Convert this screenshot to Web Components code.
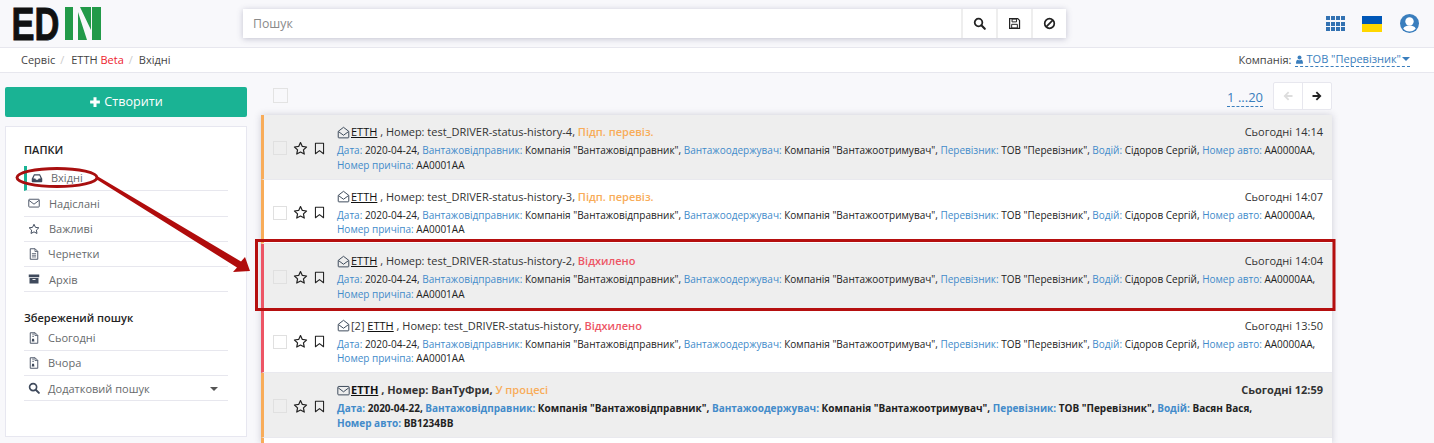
<!DOCTYPE html>
<html lang="uk">
<head>
<meta charset="utf-8">
<title>EDIN</title>
<style>
  html, body { margin: 0; height: 100%; }
  body {
    width: 1434px; height: 443px; overflow: hidden; position: relative;
    background: #f8f8fb; color: #333;
    font: 11px/1.4 "Open Sans", "Noto Sans", sans-serif;
  }
  .main { display: flex; align-items: flex-start; }
</style>
</head>
<body>
<edn-header></edn-header>
<edn-crumbs></edn-crumbs>
<div class="main">
  <edn-sidebar></edn-sidebar>
  <edn-list>
    <edn-row state="Підп. перевіз." tone="#f8ac59" shade num="test_DRIVER-status-history-4" time="Сьогодні 14:14"></edn-row>
    <edn-row state="Підп. перевіз." tone="#f8ac59" num="test_DRIVER-status-history-3" time="Сьогодні 14:07"></edn-row>
    <edn-row state="Відхилено" tone="#ed5565" shade num="test_DRIVER-status-history-2" time="Сьогодні 14:04"></edn-row>
    <edn-row state="Відхилено" tone="#ed5565" prefix="[2] " num="test_DRIVER-status-history" time="Сьогодні 13:50"></edn-row>
    <edn-row state="У процесі" tone="#f8ac59" shade unread num="ВанТуФри" time="Сьогодні 12:59" date="2020-04-22" driver="Васян Вася" last="Номер авто:|BB1234BB"></edn-row>
    <edn-row blank tone="#f8ac59"></edn-row>
  </edn-list>
</div>
<edn-notes></edn-notes>

<script>
// FontAwesome-ish icons, redrawn by hand. All on a 16 box.
const ICONS = {
  envOpen: '<path d="M1.5 6.6 8 1.6l6.5 5v7.2a.8.8 0 0 1-.8.8H2.3a.8.8 0 0 1-.8-.8z" fill="none" stroke="currentColor" stroke-width="1.2"/><path d="M2 7l6 4.4L14 7" fill="none" stroke="currentColor" stroke-width="1.2"/>',
  env: '<rect x="1" y="3" width="14" height="10.4" rx="1" fill="none" stroke="currentColor" stroke-width="1.2"/><path d="M1.4 4.6 8 9.6l6.6-5" fill="none" stroke="currentColor" stroke-width="1.2"/>',
  inbox: '<path d="M4 3h8l3 6v3.6a1 1 0 0 1-1 1H2a1 1 0 0 1-1-1V9z" fill="currentColor"/><path d="M4.800 4.500h6.400l1.700 4.300h-2.700l-.8 1.400H6.600l-.8-1.400H3.100z" fill="#fff"/>',
  star: '<path d="M8 1.700l1.950 4.100 4.500.6-3.300 3.100.85 4.450L8 11.800l-4 2.150.85-4.450-3.300-3.100 4.500-.6z" fill="none" stroke="currentColor" stroke-width="1.300" stroke-linejoin="round"/>',
  bookmark: '<path d="M3 1.500h10v13L8 10.600 3 14.500z" fill="none" stroke="currentColor" stroke-width="1.300" stroke-linejoin="round"/>',
  file: '<path d="M3 1h6.500L13 4.500V15H3z" fill="none" stroke="currentColor" stroke-width="1.200"/><path d="M9.300 1.200v3.500H13M5.200 7.500h5.600M5.200 9.700h5.600M5.200 11.900h5.600" fill="none" stroke="currentColor"/>',
  fileZip: '<path d="M3 1h6.500L13 4.500V15H3z" fill="none" stroke="currentColor" stroke-width="1.200"/><path d="M9.300 1.200v3.500H13" fill="none" stroke="currentColor"/><path d="M6 2h1.500v1.500H6zM6 5h1.500v1.500H6zM5.500 9h2.500l.5 3.500H5z" fill="currentColor"/>',
  archive: '<path d="M1 2h14v3.500H1zM2 6.500h12V14H2z" fill="currentColor"/><path d="M6 8h4v1.200H6z" fill="#fff"/>',
  search: '<circle cx="6.800" cy="6.800" r="4.700" fill="none" stroke="currentColor" stroke-width="2.200"/><path d="M10.300 10.300l4.200 4.200" stroke="currentColor" stroke-width="2.600" stroke-linecap="round"/>',
  save: '<path d="M2 2h10l2.200 2.200V14H2z" fill="none" stroke="currentColor" stroke-width="1.500"/><path d="M5 2.500h5.500v3.500H5zM4.500 9h7v4.500h-7z" fill="none" stroke="currentColor" stroke-width="1.200"/>',
  ban: '<circle cx="8" cy="8" r="5.900" fill="none" stroke="currentColor" stroke-width="2.100"/><path d="M3.900 12.100l8.200-8.200" stroke="currentColor" stroke-width="2.100"/>',
  plus: '<path d="M6 1.500h4V6h4.500v4H10v4.500H6V10H1.500V6H6z" fill="currentColor"/>',
  left: '<path d="M8 2 2 8l6 6 1.700-1.700-3-3h7.300V6.700H6.700l3-3z" fill="currentColor"/>',
  right: '<path d="M8 2l6 6-6 6-1.700-1.700 3-3H2V6.700h7.300l-3-3z" fill="currentColor"/>',
  user: '<circle cx="8" cy="4.600" r="3.500" fill="currentColor"/><path d="M1.800 14.500c0-4 1.600-6 3.200-6 1 .7 1.900 1 3 1s2-.3 3-1c1.600 0 3.200 2 3.200 6 0 .6-.5 1-1 1H2.800c-.5 0-1-.4-1-1z" fill="currentColor"/>',
};
const icon = (name, size, extra = '') =>
  `<svg viewBox="0 0 16 16" width="${size}" height="${size}" style="display:block;flex:none;${extra}">${ICONS[name]}</svg>`;

class EdnHeader extends HTMLElement {
  constructor() {
    super();
    this.attachShadow({ mode: 'open' }).innerHTML = `
      <style>
        :host { display: flex; align-items: center; height: 48px; box-sizing: border-box; padding-left: 13px; border-bottom: 1px solid #e7e7ee; background: #f8f8fb; }
        .logo { display: block; flex: none; width: 230px; height: 47px; overflow: visible; }
        .search { display: flex; width: 823px; height: 29px; margin-top: -1px; background: #fff; box-shadow: 0 1px 6px rgba(70,70,110,.3); }
        .search span { flex: 1; padding-left: 10px; line-height: 29px; font-size: 12.300px; color: #8a8a8a; }
        .search i { display: flex; align-items: center; justify-content: center; width: 33px; border-left: 2px solid #eee; color: #222; }
        .tools { display: flex; align-items: center; margin-left: auto; margin-right: 15px; color: #337ab7; }
        .flag { width: 20px; height: 16px; margin: 0 18px 0 17px; background: linear-gradient(#0057b7 50%, #ffd700 50%); }
        .grid { display: grid; grid-template-columns: repeat(4, 4px); grid-auto-rows: 4px; gap: 1.500px 1px; }
        .grid b { background: #3372b2; }
        .avatar { display: block; width: 19px; height: 19px; }
      </style>
      <svg class="logo" viewBox="0 0 230 47">
        <g transform="scale(1 1.33)">
          <text x="-1.500" y="30" font-family="Liberation Sans" font-weight="700" font-size="34.500" fill="#111" stroke="#111" stroke-width=".7">ED</text>
        </g>
        <path d="M52 7h8v33h-8zM65 12V40H74zM67 7H78V30zM79 7h9v33h-9z" fill="#229a49"/>
      </svg>
      <div class="search">
        <span>Пошук</span>
        <i>${icon('search', 13)}</i><i>${icon('save', 13)}</i><i>${icon('ban', 13)}</i>
      </div>
      <div class="tools">
        <div class="grid">${'<b></b>'.repeat(12)}</div>
        <div class="flag"></div>
        <svg class="avatar" viewBox="0 0 19 19">
          <circle cx="9.500" cy="9.500" r="9.500" fill="#3a7ebd"/>
          <circle cx="9.500" cy="7.500" r="4.200" fill="#fff"/>
          <path d="M3.200 14.500C4.500 12.300 6.800 11.800 9.500 11.800s5 .5 6.300 2.700a8 8 0 0 1-12.600 0z" fill="#fff"/>
        </svg>
      </div>`;
  }
}

class EdnCrumbs extends HTMLElement {
  constructor() {
    super();
    this.attachShadow({ mode: 'open' }).innerHTML = `
      <style>
        :host { display: flex; align-items: center; height: 25px; box-sizing: border-box; padding: 0 24px 1px 21px; background: #fff; border-bottom: 1px solid #e7e7ee; font-size: 11px; color: #444; }
        em { font-style: normal; color: #ccc; margin: 0 7px 0 5px; }
        em + span + em { margin-right: 6px; }
        .red { color: #ed1c2e; }
        .co { margin-left: auto; display: flex; align-items: center; gap: 3px; }
        .sel { display: flex; align-items: center; gap: 3px; color: #3a7ebd; border-bottom: 1px dashed #3a7ebd; line-height: 14px; margin-bottom: -1px; }
        .caret { width: 0; height: 0; border: 4px solid transparent; border-top-color: #3a7ebd; border-bottom: 0; margin-left: -2px; }
      </style>
      <span>Сервіс</span><em>/</em>
      <span>ЕТТН <span class="red">Beta</span></span><em>/</em>
      <span>Вхідні</span>
      <div class="co">Компанія:
        <div class="sel">${icon('user', 9)}ТОВ "Перевізник"<i class="caret"></i></div>
      </div>`;
  }
}

class EdnFolder extends HTMLElement {
  constructor() {
    super();
    const pad = this.getAttribute('pad') || 9;
    this.attachShadow({ mode: 'open' }).innerHTML = `
      <style>
        :host { display: flex; align-items: center; height: 25.300px; box-sizing: border-box; border-bottom: 1px solid #e7e7ee; padding-left: 4px; font-size: 11px; color: #676a6c; position: relative; }
        :host([active]) { border-left: 3px solid #1ab394; padding-left: 4px; }
        .ic { width: 12px; display: flex; justify-content: center; color: #3f4a5c; }
        .lbl { margin-left: ${pad}px; }
        .caret { position: absolute; right: 10px; top: 11px; width: 0; height: 0; border: 4px solid transparent; border-top-color: #555; border-bottom: 0; }
      </style>
      <span class="ic">${icon(this.getAttribute('icon'), 12)}</span>
      <span class="lbl"><slot></slot></span>
      ${this.hasAttribute('caret') ? '<i class="caret"></i>' : ''}`;
  }
}

class EdnSidebar extends HTMLElement {
  constructor() {
    super();
    this.attachShadow({ mode: 'open' }).innerHTML = `
      <style>
        :host { display: block; flex: none; width: 242px; margin: 14px 0 0 5px; }
        .btn { display: flex; align-items: center; justify-content: center; gap: 3px; height: 30px; border-radius: 2px; background: #1ab394; color: #fff; font-size: 12.600px; }
        .panel { margin-top: 9px; height: 311px; box-sizing: border-box; padding: 15px 18px 0 18px; background: #fff; border: 1px solid #e7e7f0; }
        h4 { margin: 0; font-size: 11px; line-height: 15px; font-weight: 600; color: #222; }
        .g1 { margin-bottom: 9px; }
        .g2 { margin-top: 18px; }
      </style>
      <div class="btn">${icon('plus', 12)}Створити</div>
      <div class="panel">
        <h4 class="g1">ПАПКИ</h4>
        <edn-folder icon="inbox" pad="8" active>Вхідні</edn-folder>
        <edn-folder icon="env" pad="9">Надіслані</edn-folder>
        <edn-folder icon="star" pad="9">Важливі</edn-folder>
        <edn-folder icon="file" pad="8">Чернетки</edn-folder>
        <edn-folder icon="archive" pad="9">Архів</edn-folder>
        <h4 class="g2">Збережений пошук</h4>
        <edn-folder icon="fileZip" pad="8">Сьогодні</edn-folder>
        <edn-folder icon="fileZip" pad="8">Вчора</edn-folder>
        <edn-folder icon="search" pad="8" caret>Додатковий пошук</edn-folder>
      </div>`;
  }
}

class EdnList extends HTMLElement {
  constructor() {
    super();
    this.attachShadow({ mode: 'open' }).innerHTML = `
      <style>
        :host { display: block; flex: none; width: 1071px; margin: 0 0 0 14px; }
        .top { display: flex; align-items: flex-start; height: 42px; padding-top: 9px; box-sizing: border-box; }
        .check { width: 13px; height: 13px; margin: 6px 0 0 12px; border: 1px solid #e3e3e3; background: #f8f8fb; }
        .pages { margin: 8px 0 0 auto; border-bottom: 1px dashed #3a7ebd; line-height: 15px; font-size: 13px; color: #3a7ebd; height: 16px; }
        .nav { display: flex; margin: 0 0 0 10px; height: 26px; border: 1px solid #e7e7ee; border-radius: 2px; background: #fff; }
        .nav i { display: flex; align-items: center; justify-content: center; width: 28px; }
        .nav i + i { border-left: 1px solid #e7e7ee; }
        .rows { box-shadow: 0 0 7px rgba(60,60,90,.22); }
      </style>
      <div class="top">
        <div class="check"></div>
        <div class="pages">1 ...20</div>
        <div class="nav"><i style="color:#ddd">${icon('left', 12)}</i><i style="color:#222">${icon('right', 12)}</i></div>
      </div>
      <div class="rows"><slot></slot></div>`;
  }
}

class EdnRow extends HTMLElement {
  constructor() {
    super();
    const a = (n, d) => this.getAttribute(n) ?? d;
    const unread = this.hasAttribute('unread');
    const root = this.attachShadow({ mode: 'open' });
    // row cut by the bottom of the window: only its edge shows
    if (this.hasAttribute('blank')) {
      root.innerHTML = `<style>:host { display: block; height: 6px; border-left: 3px solid ${a('tone')}; background: #fff; }</style>`;
      return;
    }
    const [lastK, lastV] = a('last', 'Номер причіпа:|AA0001AA').split('|');
    const kv = (k, v, sep = ', ') => `<span class="k">${k}</span> ${v}${sep}`;
    root.innerHTML = `
      <style>
        :host { display: flex; height: 64.500px; box-sizing: border-box; border-left: 3px solid ${a('tone')}; border-bottom: 1px solid #e9e9ee; background: ${this.hasAttribute('shade') ? '#eee' : '#fff'}; color: #222; font-weight: ${unread ? 700 : 400}; }
        .ctl { flex: none; display: flex; align-items: center; width: 73px; box-sizing: border-box; padding: 3px 0 0 9px; color: #222; }
        .check { width: 12px; height: 12px; border: 1px solid #e0e0e0; background: ${this.hasAttribute('shade') ? '#eee' : '#fff'}; margin-right: 6px; }
        .body { flex: 1; min-width: 0; padding: 9px 9px 0 0; }
        .head { display: flex; align-items: center; height: 16px; font-size: 11px; line-height: 16px; white-space: pre; color: #333; }
        .head svg { margin-right: 1px; color: #3b4858; }
        .head u { color: #111; }
        .time { margin-left: auto; }
        .state { color: ${a('tone')}; font-weight: 600; }
        .meta { margin-top: 3px; font-size: 10px; line-height: 14.500px; }
        .k { color: #428bca; }
      </style>
      <div class="ctl">
        <div class="check"></div>
        ${icon('star', 15, 'margin-right:5px')}${icon('bookmark', 13)}
      </div>
      <div class="body">
        <div class="head">${icon(unread ? 'env' : 'envOpen', 13)}${a('prefix', '')}<u>ЕТТН</u> , Номер: ${a('num')}, <span class="state">${a('state')}</span><span class="time">${a('time')}</span></div>
        <div class="meta">${kv('Дата:', a('date', '2020-04-24'))}${kv('Вантажовідправник:', 'Компанія "Вантажовідправник"')}${kv('Вантажоодержувач:', 'Компанія "Вантажоотримувач"')}${kv('Перевізник:', 'ТОВ "Перевізник"')}${kv('Водій:', a('driver', 'Сідоров Сергій'))}${unread ? '' : kv('Номер авто:', 'AA0000AA')}<br>${kv(lastK, lastV, '')}</div>
      </div>`;
  }
}

// Red marks someone drew on top of the screenshot
class EdnNotes extends HTMLElement {
  constructor() {
    super();
    this.attachShadow({ mode: 'open' }).innerHTML = `
      <style>
        :host { position: absolute; left: 0; top: 0; width: 1434px; height: 443px; pointer-events: none; }
        svg { display: block; }
      </style>
      <svg width="1434" height="443" viewBox="0 0 1434 443">
        <ellipse cx="57" cy="177.500" rx="40" ry="9" fill="none" stroke="#a80f0f" stroke-width="3"/>
        <path d="M97 176 241 261.500 245 257 250 271 233 272 237 267.500 96 179z" fill="#b00c0c"/>
        <rect x="256.500" y="240.500" width="1077.500" height="69" fill="none" stroke="#b50f0f" stroke-width="3"/>
      </svg>`;
  }
}

customElements.define('edn-header', EdnHeader);
customElements.define('edn-crumbs', EdnCrumbs);
customElements.define('edn-folder', EdnFolder);
customElements.define('edn-sidebar', EdnSidebar);
customElements.define('edn-list', EdnList);
customElements.define('edn-row', EdnRow);
customElements.define('edn-notes', EdnNotes);
</script>
</body>
</html>
